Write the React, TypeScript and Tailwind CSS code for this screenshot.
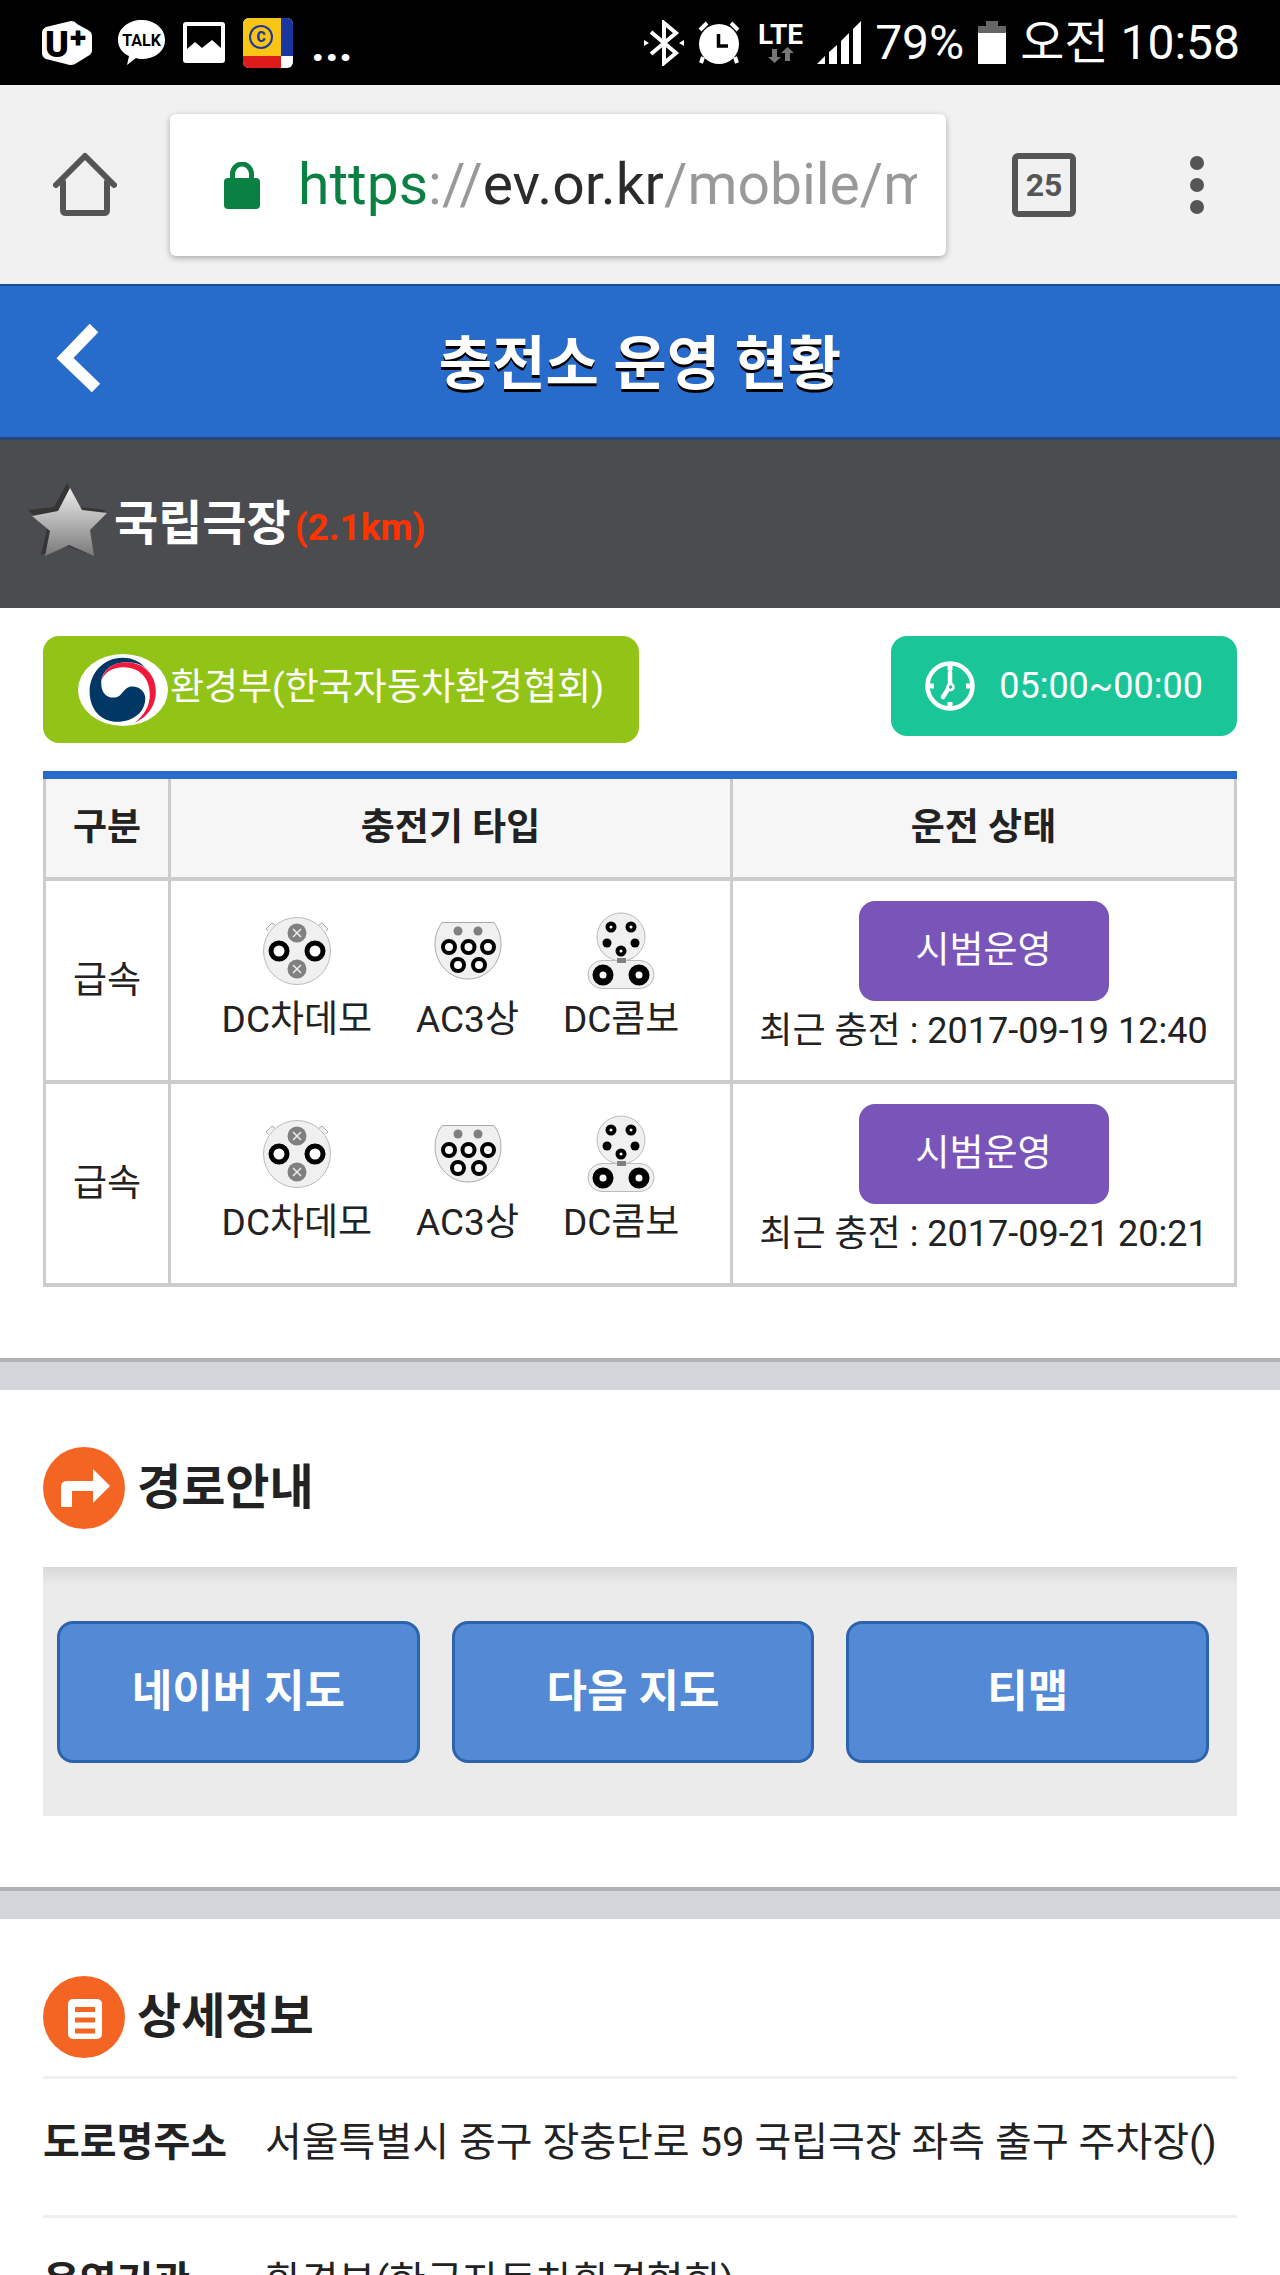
import React from 'react';

interface Charge {
  kind: string;
  status: string;
  lastCharged: string;
}

const chargers: Charge[] = [
  { kind: '급속', status: '시범운영', lastCharged: '2017-09-19 12:40' },
  { kind: '급속', status: '시범운영', lastCharged: '2017-09-21 20:21' },
];

const mapApps = ['네이버 지도', '다음 지도', '티맵'];

const details = [
  { label: '도로명주소', value: '서울특별시 중구 장충단로 59 국립극장 좌측 출구 주차장()' },
  { label: '운영기관', value: '환경부(한국자동차환경협회)' },
];

const StatusBar: React.FC = () => (
  <div className="flex h-[85px] items-center justify-between bg-black pl-[42px] pr-10 text-white">
    <div className="flex items-center gap-[18px]">
      <svg className="mr-2" width="50" height="44" viewBox="0 0 50 44">
        <path d="M4 6 L29 0 Q33 0 35 3 L46 9 Q50 11 50 15 V29 Q50 33 46 35 L33 43 Q29 45 24 43 L4 38 Q0 36 0 32 V12 Q0 8 4 6Z" fill="#fff" />
        <text x="3" y="36" fontSize="36" fontWeight="900" fill="#000">U</text>
        <text x="28" y="27" fontSize="30" fontWeight="900" fill="#000">+</text>
      </svg>
      <svg width="47" height="45" viewBox="0 0 47 45">
        <path d="M23.500 0C36 0 47 8 47 20S36 39 23.500 39Q20 39 18 38L9 45L11 36C4 33 0 27 0 20C0 8 11 0 23.500 0Z" fill="#fff" />
        <text x="23.500" y="26" fontSize="16" fontWeight="700" textAnchor="middle" fill="#000">TALK</text>
      </svg>
      <svg width="42" height="41" viewBox="0 0 42 41">
        <rect width="42" height="41" rx="3" fill="#fff" />
        <path d="M4 4H38V26L29 18L19 26L12 20L4 27Z" fill="#000" />
      </svg>
      <svg width="50" height="50" viewBox="0 0 50 50">
        <clipPath id="app"><rect width="50" height="50" rx="6" /></clipPath>
        <g clipPath="url(#app)">
          <rect width="50" height="50" fill="#fff" />
          <rect width="38" height="38" fill="#f9c515" />
          <rect x="38" width="12" height="38" fill="#1a35a0" />
          <rect y="38" width="38" height="12" fill="#de1b1b" />
        </g>
        <circle cx="18" cy="19" r="11" fill="none" stroke="#1a35a0" strokeWidth="2" />
        <text x="18" y="24" fontSize="14" fontWeight="900" textAnchor="middle" fill="#1a35a0">C</text>
      </svg>
      <span className="pt-1 text-[48px] leading-none font-bold">...</span>
    </div>
    <div className="flex items-center gap-[14px]">
      <svg width="40" height="46" viewBox="0 0 40 46" fill="none" stroke="#fff" strokeWidth="4">
        <path d="M7 12L32 33L20 43V3L32 13L7 34" />
        <path d="M0 20L5 23L0 26ZM40 20L35 23L40 26Z" fill="#fff" stroke="none" />
      </svg>
      <svg width="42" height="44" viewBox="0 0 42 44">
        <path d="M5 36L3 42M37 36L39 42M2 9L9 2M40 9L33 2" stroke="#fff" strokeWidth="4" />
        <ellipse cx="21" cy="23" rx="20" ry="20" fill="#fff" />
        <path d="M20.500 13V25H30" fill="none" stroke="#000" strokeWidth="3.500" />
      </svg>
      <div className="ml-1 flex flex-col items-center">
        <span className="text-[28px] leading-6 font-bold">LTE</span>
        <svg width="26" height="16" viewBox="0 0 26 16" fill="#777">
          <path d="M4 2H9V10H13L6.500 16L0 10H4ZM17 14H22V6H26L19.500 0L13 6H17Z" />
        </svg>
      </div>
      <svg width="44" height="43" viewBox="0 0 44 43" fill="#fff">
        <path d="M0 43L8 35V43ZM12 31L20 24V43H12ZM24 20L32 12V43H24ZM36 8L44 0V43H36Z" />
      </svg>
      <span className="text-[48px] leading-none">79%</span>
      <svg width="28" height="43" viewBox="0 0 28 43">
        <path d="M8 0H20V5H28V12H0V5H8Z" fill="#666" />
        <rect y="12" width="28" height="31" fill="#fff" />
      </svg>
      <span className="text-[48px] leading-none">오전 10:58</span>
    </div>
  </div>
);

const BrowserBar: React.FC = () => (
  <div className="flex items-center bg-[#f1f1f1] pt-[29px] pb-7">
    <button type="button" aria-label="홈" className="flex w-[170px] justify-center">
      <svg width="64" height="66" viewBox="0 0 64 66" fill="none" stroke="#555" strokeWidth="6" strokeLinecap="round" strokeLinejoin="round">
        <path d="M3 33L32 4L61 33M10 30V58Q10 61 13 61H51Q54 61 54 58V30" />
      </svg>
    </button>
    <div className="flex h-[142px] min-w-0 flex-1 items-center rounded-md bg-white pr-[29px] pl-[54px] shadow-[0_2px_6px_rgba(0,0,0,0.3)]">
      <svg className="mr-[38px] shrink-0" width="36" height="47" viewBox="0 0 36 47">
        <rect y="16" width="36" height="31" rx="4" fill="#0b8043" />
        <path d="M8.500 18V12a9.500 10 0 0 1 19 0V18" fill="none" stroke="#0b8043" strokeWidth="5" />
      </svg>
      {/* scheme, separator, host and path each get their own colour stop */}
      <input
        type="text"
        aria-label="주소"
        defaultValue="https://ev.or.kr/mobile/m"
        className="w-full min-w-0 bg-[linear-gradient(to_right,#0b8043_130px,#999_130px,#999_184px,#2b2b2b_184px,#2b2b2b_366px,#999_366px)] bg-clip-text text-[57px] leading-[72px] text-transparent outline-none"
      />
    </div>
    <button type="button" aria-label="탭" className="ml-[66px] flex size-16 items-center justify-center rounded-md border-6 border-[#555] text-[32px] leading-none font-bold text-[#555]">
      25
    </button>
    <button type="button" aria-label="메뉴" className="flex w-[204px] justify-center pl-[38px]">
      <svg width="14" height="58" viewBox="0 0 14 58" fill="#555">
        <circle cx="7" cy="7" r="7" />
        <circle cx="7" cy="29" r="7" />
        <circle cx="7" cy="51" r="7" />
      </svg>
    </button>
  </div>
);

const Emblem: React.FC = () => (
  <svg width="90" height="72" viewBox="0 0 89 71">
    <ellipse cx="44.500" cy="35.500" rx="44.500" ry="35.500" fill="#fff" />
    <path d="M70 17C63 8 55 3.500 44 3.500C25 3.500 11.500 19 11.500 37C11.500 55 23 67 39 67C55 67 66.500 57 66.500 44C66.500 37 61 32 54 32C44 32 45 43 35 43C27 43 23 37 23 29C23 17 33 8 48 8C58 8 65 11 70 17Z" fill="#003764" />
    <path d="M23.500 26C25 15 35 8 47 8C65 8 77 20 77 37C77 51 69 62 56 68C66 60 71 51 71 40C71 24 61 13 45 13C34 13 26 18 23.500 26Z" fill="#f0193c" />
  </svg>
);

const ChademoIcon: React.FC = () => (
  <svg width="70" height="78" viewBox="0 0 70 78">
    <path d="M6 19L4 17L10 11L13 13M64 19L66 17L60 11L57 13" fill="#f0f0f0" stroke="#aaa" />
    <circle cx="35" cy="39" r="33.500" fill="#f0f0f0" stroke="#bbb" />
    <circle cx="35" cy="21" r="9.500" fill="#808080" />
    <circle cx="35" cy="57" r="9.500" fill="#808080" />
    <path d="M31 17l8 8m0-8l-8 8M31 53l8 8m0-8l-8 8" stroke="#eee" strokeWidth="1.500" />
    <g fill="#fff" stroke="#000" strokeWidth="5">
      <circle cx="17" cy="39" r="8" />
      <circle cx="53" cy="39" r="8" />
    </g>
  </svg>
);

const Ac3Icon: React.FC = () => (
  <svg width="70" height="78" viewBox="0 0 70 78">
    <path d="M9 10.500H61Q68 20 68 32C68 52 53 67 35 67S2 52 2 32Q2 20 9 10.500Z" fill="#f0f0f0" stroke="#aaa" />
    <circle cx="25" cy="19" r="4.500" fill="#808080" />
    <circle cx="45" cy="19" r="4.500" fill="#808080" />
    <g fill="#fff" stroke="#000" strokeWidth="4">
      <circle cx="16" cy="35" r="6" />
      <circle cx="35.500" cy="35" r="6" />
      <circle cx="55" cy="35" r="6" />
      <circle cx="25" cy="53" r="6" />
      <circle cx="46" cy="53" r="6" />
    </g>
  </svg>
);

const ComboIcon: React.FC = () => (
  <svg width="70" height="78" viewBox="0 0 70 78">
    <rect x="2" y="48.500" width="66" height="28" rx="14" fill="#f0f0f0" stroke="#bbb" />
    <circle cx="35" cy="25" r="24" fill="#f0f0f0" stroke="#bbb" />
    <rect x="31" y="46" width="9" height="5" fill="#808080" />
    <g fill="#fff" stroke="#000" strokeWidth="4">
      <circle cx="25" cy="15" r="3.500" />
      <circle cx="45" cy="15" r="3.500" />
      <circle cx="35" cy="39" r="3.500" />
    </g>
    <circle cx="21" cy="31" r="4.500" />
    <circle cx="49" cy="31" r="4.500" />
    <g fill="#fff" stroke="#000" strokeWidth="7">
      <circle cx="17" cy="63" r="7" />
      <circle cx="53" cy="63" r="7" />
    </g>
  </svg>
);

const connectors = [
  { name: 'DC차데모', Icon: ChademoIcon },
  { name: 'AC3상', Icon: Ac3Icon },
  { name: 'DC콤보', Icon: ComboIcon },
];

const ChargerTable: React.FC = () => (
  <table className="mt-7 w-full table-fixed border-collapse border-t-8 border-t-[#286ccb] text-center text-[37px] leading-[60px]">
    <thead>
      <tr className="h-[104px] bg-[#f6f6f6]">
        <th className="w-[125px] border-x-3 border-b-4 border-[#ccc]">구분</th>
        <th className="w-[562px] border-x-3 border-b-4 border-[#ccc]">충전기 타입</th>
        <th className="border-x-3 border-b-4 border-[#ccc]">운전 상태</th>
      </tr>
    </thead>
    <tbody>
      {chargers.map((charger) => (
        <tr key={charger.lastCharged} className="h-[203px]">
          <td className="border-x-3 border-b-4 border-[#ccc]">{charger.kind}</td>
          <td className="border-x-3 border-b-4 border-[#ccc]">
            <div className="flex justify-center gap-11">
              {connectors.map(({ name, Icon }) => (
                <div key={name} className="flex flex-col items-center">
                  <Icon />
                  <span>{name}</span>
                </div>
              ))}
            </div>
          </td>
          <td className="border-x-3 border-b-4 border-[#ccc]">
            <div className="flex flex-col items-center whitespace-nowrap">
              <span className="flex h-[100px] w-[250px] items-center justify-center rounded-2xl bg-[#7a55b9] text-white">
                {charger.status}
              </span>
              <span className="text-[36px]">최근 충전 : {charger.lastCharged}</span>
            </div>
          </td>
        </tr>
      ))}
    </tbody>
  </table>
);

const Divider: React.FC = () => (
  <div className="h-8 border-t-4 border-[#afb1b4] bg-[#d2d6db]" />
);

export default function App() {
  return (
    <div className="flex h-screen flex-col overflow-hidden bg-white font-['Roboto','Noto_Sans_CJK_KR',sans-serif] text-[#222] *:shrink-0">
      <StatusBar />
      <BrowserBar />

      <header className="grid h-[156px] grid-cols-[1fr_auto_1fr] items-center border-t-2 border-b-3 border-t-[#1b4f9c] border-b-[#26467c] bg-[#286ccb] px-14">
        <a href="#back" aria-label="뒤로" className="pb-2">
          <svg width="46" height="70" viewBox="0 0 46 70">
            <path d="M38 5L9 35L40 65" fill="none" stroke="#fff" strokeWidth="12" />
          </svg>
        </a>
        <h1 className="pt-1 text-[58px] leading-[80px] font-bold text-white [text-shadow:0_3px_0_#000]">충전소 운영 현황</h1>
      </header>

      <div className="flex h-[168px] items-center bg-[#4b4c50] pl-7">
        <svg className="mb-2" width="80" height="74" viewBox="0 0 80 74">
          <defs>
            <linearGradient id="star" x1="0" y1="0" x2="0" y2="1">
              <stop offset="0" stopColor="#ececec" />
              <stop offset="1" stopColor="#7a7a7a" />
            </linearGradient>
          </defs>
          <path d="M39 0L52 24L78 27L60 46L64 72L39 63L13 72L19 46L0 27L26 24Z" fill="#353535" />
          <path d="M42 5L54 27L79 30L62 47L66 73L41 62L17 73L22 48L4 33L30 28Z" fill="url(#star)" />
        </svg>
        <div className="flex items-baseline gap-1 pt-1 pl-[6px] leading-[64px] font-bold">
          <h2 className="text-[48px] text-white">국립극장</h2>
          <span className="text-[37px] text-[#ff3300]">(2.1km)</span>
        </div>
      </div>

      <section className="px-[43px] pt-7 pb-[71px]">
        <div className="flex items-start justify-between leading-[60px] text-white">
          <span className="flex h-[107px] items-center gap-[2px] rounded-2xl bg-[#92c417] px-[35px] text-[37px]">
            <Emblem />
            <span className="pb-1">환경부(한국자동차환경협회)</span>
          </span>
          <span className="flex h-[100px] items-center gap-6 rounded-2xl bg-[#1ac598] px-[34px] text-[36px]">
            <svg width="50" height="50" viewBox="0 0 50 50" fill="none" stroke="#fff">
              <circle cx="25" cy="25" r="22.500" strokeWidth="4.500" />
              <path d="M25 4V9M25 41V46M4 25H9M41 25H46" strokeWidth="5" />
              <path d="M25 11V25L18 36" strokeWidth="4.500" strokeLinecap="round" />
              <circle cx="25.500" cy="26" r="3" fill="#1ac598" strokeWidth="2.500" />
            </svg>
            05:00~00:00
          </span>
        </div>
        <ChargerTable />
      </section>

      <Divider />

      <section className="px-[43px] pt-[57px] pb-[71px]">
        <div className="flex items-center gap-3">
          <svg width="82" height="82" viewBox="0 0 82 82">
            <circle cx="41" cy="41" r="41" fill="#f46524" />
            <path d="M18 60V40Q18 34 24 34H50V22L67 39L50 56V44H29V60Z" fill="#fff" />
          </svg>
          <h2 className="text-[48px] leading-[64px] font-bold">경로안내</h2>
        </div>
        <div className="mt-[38px] grid grid-cols-3 gap-8 bg-[#ebebeb] bg-[linear-gradient(#d8d8d8,#ebebeb_18px)] pt-[54px] pr-7 pb-[53px] pl-[14px]">
          {mapApps.map((name) => (
            <button
              key={name}
              type="button"
              className="h-[142px] rounded-2xl border-3 border-[#2c63ab] bg-[#5389d5] text-[44px] leading-[60px] font-bold text-white"
            >
              {name}
            </button>
          ))}
        </div>
      </section>

      <Divider />

      <section className="px-[43px] pt-[57px]">
        <div className="flex items-center gap-3">
          <svg width="82" height="82" viewBox="0 0 82 82">
            <circle cx="41" cy="41" r="41" fill="#f46524" />
            <rect x="25" y="23" width="34" height="40" rx="5" fill="#fff" />
            <path d="M32 33.500H52M32 44H52M32 55H52" stroke="#f46524" strokeWidth="5" />
          </svg>
          <h2 className="text-[48px] leading-[64px] font-bold">상세정보</h2>
        </div>
        <dl className="mt-[18px] text-[40px] leading-[60px]">
          {details.map((item) => (
            <div key={item.label} className="flex h-[139px] items-center border-t-3 border-[#efefef] pb-2">
              <dt className="w-[222px] shrink-0 font-bold">{item.label}</dt>
              <dd className="whitespace-nowrap">{item.value}</dd>
            </div>
          ))}
        </dl>
      </section>
    </div>
  );
}
